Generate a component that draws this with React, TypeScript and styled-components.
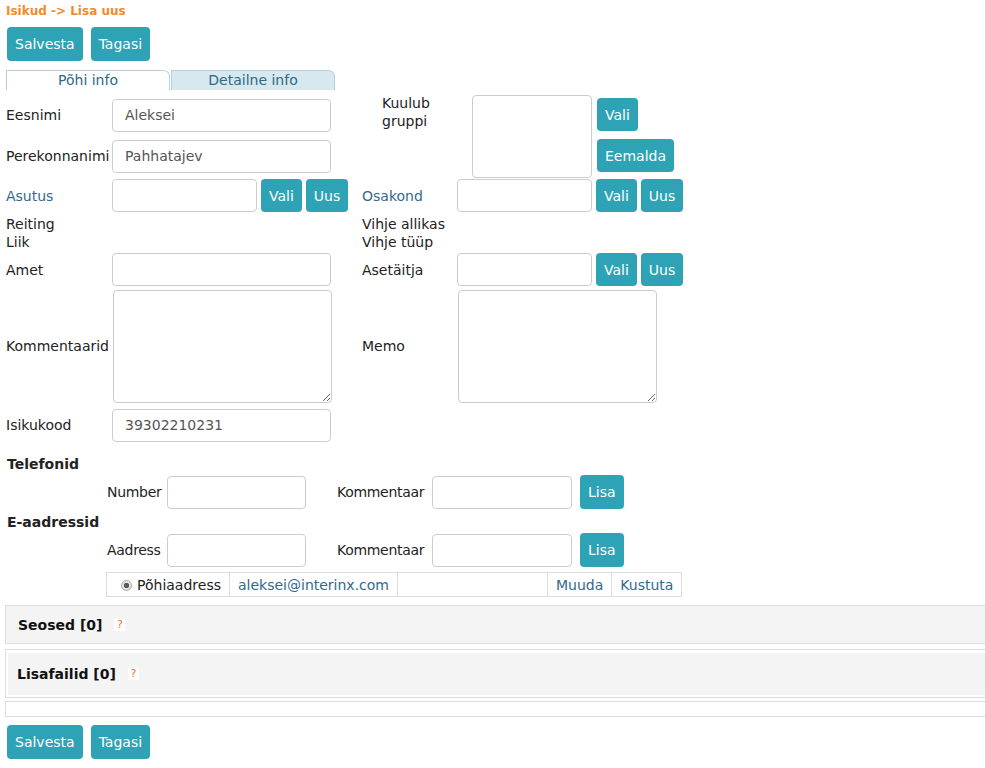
import React from 'react';
import styled, { createGlobalStyle, css } from 'styled-components';

const GlobalStyle = createGlobalStyle`
  html, body {
    margin: 0;
    padding: 0;
    background: #fff;
    overflow-x: hidden;
  }
  body {
    font-family: "DejaVu Sans", Verdana, sans-serif;
    font-size: 14px;
    color: #222;
  }
`;

const Page = styled.div`
  padding-top: 3px;
`;

const Breadcrumb = styled.div`
  padding-left: 6px;
  font-size: 12px;
  font-weight: bold;
  line-height: 16px;
  color: #f38a2c;
`;

const Toolbar = styled.div<{ top: number }>`
  display: flex;
  gap: 8px;
  padding-left: 7px;
  margin-top: ${({ top }) => top}px;
`;

const Button = styled.button<{ small?: boolean }>`
  height: ${({ small }) => (small ? 33 : 34)}px;
  padding: 0 8px;
  border: none;
  border-radius: 4px;
  background: #2fa3b6;
  color: #fff;
  font-family: inherit;
  font-size: 14px;
  cursor: pointer;
  white-space: nowrap;
`;

const Tabs = styled.div`
  display: flex;
  gap: 1px;
  margin-top: 9px;
  padding-left: 6px;
`;

const Tab = styled.div<{ active?: boolean }>`
  box-sizing: border-box;
  width: 164px;
  height: 20px;
  line-height: 19px;
  text-align: center;
  color: #2c6a87;
  border: 1px solid #b7cfda;
  border-bottom: none;
  border-top-right-radius: 7px 6px;
  background: ${({ active }) => (active ? '#fff' : '#d8e8ef')};
`;

const FormGrid = styled.div`
  display: grid;
  grid-template-columns: 106px 250px 95px 1fr;
  grid-template-rows: 42px 40px 39px 18px 18px 37px 116px 42px;
  margin-top: 4px;
  padding-left: 6px;
`;

const Label = styled.div<{ link?: boolean; span?: number }>`
  align-self: center;
  line-height: 18px;
  white-space: nowrap;
  color: ${({ link }) => (link ? '#35698c' : '#222')};
  ${({ span }) => span && css`grid-column: span ${span};`}
`;

const Field = styled.div`
  display: flex;
  align-items: center;
  gap: 4px;
`;

const Input = styled.input<{ w: number }>`
  box-sizing: border-box;
  width: ${({ w }) => w}px;
  height: 33px;
  padding: 0 12px;
  border: 1px solid #ccc;
  border-radius: 4px;
  font-family: inherit;
  font-size: 14px;
  color: #555;
  outline: none;
`;

const TextArea = styled.textarea<{ w: number }>`
  box-sizing: border-box;
  width: ${({ w }) => w}px;
  height: 113px;
  margin-left: 1px;
  border: 1px solid #ccc;
  border-radius: 4px;
  font-family: inherit;
  font-size: 14px;
  outline: none;
`;

const GroupCell = styled.div`
  grid-column: 3 / span 2;
  grid-row: 1 / span 2;
  display: flex;
  align-items: flex-start;
`;

const GroupLabel = styled.div`
  width: 90px;
  padding-left: 20px;
  line-height: 18px;
`;

const ListBox = styled.div`
  box-sizing: border-box;
  width: 120px;
  height: 83px;
  margin-top: 1px;
  border: 1px solid #ccc;
  border-radius: 4px;
`;

const GroupButtons = styled.div`
  display: flex;
  flex-direction: column;
  align-items: flex-start;
  gap: 8px;
  margin: 4px 0 0 5px;
`;

const SectionTitle = styled.div<{ top: number }>`
  margin-top: ${({ top }) => top}px;
  padding-left: 7px;
  font-weight: bold;
  line-height: 18px;
`;

const ContactRow = styled.div`
  display: flex;
  align-items: center;
  height: 34px;
  margin-top: 2px;
  padding-left: 107px;
`;

const ContactLabel = styled.div<{ w: number; ml?: number }>`
  width: ${({ w }) => w}px;
  margin-left: ${({ ml }) => ml ?? 0}px;
  white-space: nowrap;
  letter-spacing: -0.3px;
`;

const AddButton = styled(Button)`
  margin-left: 8px;
`;

const MailTable = styled.table`
  margin: 5px 0 0 106px;
  border-collapse: collapse;
  td {
    height: 23px;
    padding: 0 8px;
    border: 1px solid #ddd;
    white-space: nowrap;
  }
`;

const MailCell = styled.td<{ w?: number }>`
  ${({ w }) => w && css`width: ${w}px;`}
`;

const LinkText = styled.span`
  color: #2f6990;
`;

const Radio = styled.span`
  display: inline-block;
  box-sizing: border-box;
  width: 11px;
  height: 11px;
  margin: 0 5px 0 6px;
  vertical-align: -1px;
  border: 1px solid #a8a8a8;
  border-radius: 50%;
  background: radial-gradient(circle, #5a5a5a 0 2.5px, #e6e6e6 3px);
`;

const Panel = styled.div<{ top: number }>`
  box-sizing: border-box;
  margin: ${({ top }) => top}px -60px 0 5px;
  border: 1px solid #ddd;
  background: #f4f4f4;
  height: 39px;
  display: flex;
  align-items: center;
  padding-left: 12px;
`;

const OuterPanel = styled.div`
  box-sizing: border-box;
  margin: 5px -60px 0 5px;
  padding: 3px 0 2px 2px;
  border: 1px solid #ddd;
  background: #fff;
`;

const InnerPanel = styled.div`
  height: 42px;
  display: flex;
  align-items: center;
  padding-left: 9px;
  background: #f4f4f4;
`;

const PanelTitle = styled.span`
  font-weight: bold;
  color: #111;
`;

const Help = styled.span`
  display: inline-block;
  width: 11px;
  height: 12px;
  margin-left: 12px;
  background: #fff;
  color: #f0703c;
  font-size: 11px;
  line-height: 12px;
  text-align: center;
`;

const EmptyBox = styled.div`
  box-sizing: border-box;
  height: 16px;
  margin: 3px -60px 0 5px;
  border: 1px solid #ddd;
`;

const App: React.FC = () => {
  return (
    <Page>
      <GlobalStyle />
      <Breadcrumb>Isikud -&gt; Lisa uus</Breadcrumb>
      <Toolbar top={8}>
        <Button>Salvesta</Button>
        <Button>Tagasi</Button>
      </Toolbar>

      <Tabs>
        <Tab active>Põhi info</Tab>
        <Tab>Detailne info</Tab>
      </Tabs>

      <FormGrid>
        <Label>Eesnimi</Label>
        <Field>
          <Input w={219} defaultValue="Aleksei" />
        </Field>
        <GroupCell>
          <GroupLabel>
            Kuulub
            <br />
            gruppi
          </GroupLabel>
          <ListBox />
          <GroupButtons>
            <Button small>Vali</Button>
            <Button small>Eemalda</Button>
          </GroupButtons>
        </GroupCell>

        <Label>Perekonnanimi</Label>
        <Field>
          <Input w={219} defaultValue="Pahhatajev" />
        </Field>

        <Label link>Asutus</Label>
        <Field>
          <Input w={145} />
          <Button small>Vali</Button>
          <Button small>Uus</Button>
        </Field>
        <Label link>Osakond</Label>
        <Field>
          <Input w={135} />
          <Button small>Vali</Button>
          <Button small>Uus</Button>
        </Field>

        <Label span={2}>Reiting</Label>
        <Label span={2}>Vihje allikas</Label>
        <Label span={2}>Liik</Label>
        <Label span={2}>Vihje tüüp</Label>

        <Label>Amet</Label>
        <Field>
          <Input w={219} />
        </Field>
        <Label>Asetäitja</Label>
        <Field>
          <Input w={135} />
          <Button small>Vali</Button>
          <Button small>Uus</Button>
        </Field>

        <Label>Kommentaarid</Label>
        <Field>
          <TextArea w={219} />
        </Field>
        <Label>Memo</Label>
        <Field>
          <TextArea w={199} />
        </Field>

        <Label>Isikukood</Label>
        <Field>
          <Input w={219} defaultValue="39302210231" />
        </Field>
      </FormGrid>

      <SectionTitle top={9}>Telefonid</SectionTitle>
      <ContactRow>
        <ContactLabel w={60}>Number</ContactLabel>
        <Input w={139} />
        <ContactLabel w={95} ml={31}>Kommentaar</ContactLabel>
        <Input w={140} />
        <AddButton>Lisa</AddButton>
      </ContactRow>

      <SectionTitle top={4}>E-aadressid</SectionTitle>
      <ContactRow>
        <ContactLabel w={60}>Aadress</ContactLabel>
        <Input w={139} />
        <ContactLabel w={95} ml={31}>Kommentaar</ContactLabel>
        <Input w={140} />
        <AddButton>Lisa</AddButton>
      </ContactRow>

      <MailTable>
        <tbody>
          <tr>
            <MailCell w={106}>
              <Radio />
              Põhiaadress
            </MailCell>
            <MailCell w={151}>
              <LinkText>aleksei@interinx.com</LinkText>
            </MailCell>
            <MailCell w={133} />
            <MailCell>
              <LinkText>Muuda</LinkText>
            </MailCell>
            <MailCell>
              <LinkText>Kustuta</LinkText>
            </MailCell>
          </tr>
        </tbody>
      </MailTable>

      <Panel top={8}>
        <PanelTitle>Seosed [0]</PanelTitle>
        <Help>?</Help>
      </Panel>
      <OuterPanel>
        <InnerPanel>
          <PanelTitle>Lisafailid [0]</PanelTitle>
          <Help>?</Help>
        </InnerPanel>
      </OuterPanel>
      <EmptyBox />

      <Toolbar top={8}>
        <Button>Salvesta</Button>
        <Button>Tagasi</Button>
      </Toolbar>
    </Page>
  );
};

export default App;
